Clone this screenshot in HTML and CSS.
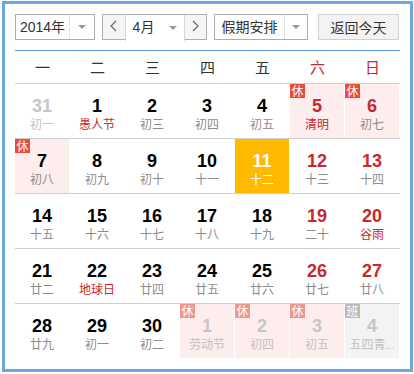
FILE: index.html
```html
<!DOCTYPE html>
<html lang="zh-CN">
<head>
    <meta charset="UTF-8">
    <meta name="viewport" content="width=device-width, initial-scale=1.0">
    <title>万年历</title>
    <link rel="stylesheet" href="styles.css">
</head>
<body>
    <div class="calendar">
        <div class="toolbar">
            <div class="select year-select">
                <span class="select-text">2014年</span>
                <span class="select-arrow"><i></i></span>
            </div>
            <div class="month-group">
                <button class="nav-btn">
                    <svg width="7" height="12" viewBox="0 0 7 12"><polyline points="6,1 1,6 6,11" fill="none" stroke="#666" stroke-width="1.2"/></svg>
                </button>
                <div class="select month-select">
                    <span class="select-text">4月</span>
                    <span class="select-arrow"><i></i></span>
                </div>
                <button class="nav-btn">
                    <svg width="7" height="12" viewBox="0 0 7 12"><polyline points="1,1 6,6 1,11" fill="none" stroke="#666" stroke-width="1.2"/></svg>
                </button>
            </div>
            <div class="select holiday-select">
                <span class="select-text">假期安排</span>
                <span class="select-arrow"><i></i></span>
            </div>
            <button class="today-btn">返回今天</button>
        </div>

        <div class="week-head">
            <span>一</span><span>二</span><span>三</span><span>四</span><span>五</span>
            <span class="weekend">六</span><span class="weekend">日</span>
        </div>

        <div class="week">
            <div class="day other"><b class="num">31</b><span class="lunar">初一</span></div>
            <div class="day"><b class="num">1</b><span class="lunar fest">愚人节</span></div>
            <div class="day"><b class="num">2</b><span class="lunar">初三</span></div>
            <div class="day"><b class="num">3</b><span class="lunar">初四</span></div>
            <div class="day"><b class="num">4</b><span class="lunar">初五</span></div>
            <div class="day rest red"><span class="tag">休</span><b class="num">5</b><span class="lunar fest">清明</span></div>
            <div class="day rest red"><span class="tag">休</span><b class="num">6</b><span class="lunar">初七</span></div>
        </div>
        <div class="week">
            <div class="day rest"><span class="tag">休</span><b class="num">7</b><span class="lunar">初八</span></div>
            <div class="day"><b class="num">8</b><span class="lunar">初九</span></div>
            <div class="day"><b class="num">9</b><span class="lunar">初十</span></div>
            <div class="day"><b class="num">10</b><span class="lunar">十一</span></div>
            <div class="day today"><b class="num">11</b><span class="lunar">十二</span></div>
            <div class="day red"><b class="num">12</b><span class="lunar">十三</span></div>
            <div class="day red"><b class="num">13</b><span class="lunar">十四</span></div>
        </div>
        <div class="week">
            <div class="day"><b class="num">14</b><span class="lunar">十五</span></div>
            <div class="day"><b class="num">15</b><span class="lunar">十六</span></div>
            <div class="day"><b class="num">16</b><span class="lunar">十七</span></div>
            <div class="day"><b class="num">17</b><span class="lunar">十八</span></div>
            <div class="day"><b class="num">18</b><span class="lunar">十九</span></div>
            <div class="day red"><b class="num">19</b><span class="lunar">二十</span></div>
            <div class="day red"><b class="num">20</b><span class="lunar fest">谷雨</span></div>
        </div>
        <div class="week">
            <div class="day"><b class="num">21</b><span class="lunar">廿二</span></div>
            <div class="day"><b class="num">22</b><span class="lunar fest">地球日</span></div>
            <div class="day"><b class="num">23</b><span class="lunar">廿四</span></div>
            <div class="day"><b class="num">24</b><span class="lunar">廿五</span></div>
            <div class="day"><b class="num">25</b><span class="lunar">廿六</span></div>
            <div class="day red"><b class="num">26</b><span class="lunar">廿七</span></div>
            <div class="day red"><b class="num">27</b><span class="lunar">廿八</span></div>
        </div>
        <div class="week last">
            <div class="day"><b class="num">28</b><span class="lunar">廿九</span></div>
            <div class="day"><b class="num">29</b><span class="lunar">初一</span></div>
            <div class="day"><b class="num">30</b><span class="lunar">初二</span></div>
            <div class="day rest other"><span class="tag">休</span><b class="num">1</b><span class="lunar">劳动节</span></div>
            <div class="day rest other"><span class="tag">休</span><b class="num">2</b><span class="lunar">初四</span></div>
            <div class="day rest other"><span class="tag">休</span><b class="num">3</b><span class="lunar">初五</span></div>
            <div class="day work other" title="五四青年节"><span class="tag">班</span><b class="num">4</b><span class="lunar">五四青<span class="dots">...</span></span></div>
        </div>
    </div>
</body>
</html>
```

FILE: styles.css
```css
body {
    margin: 0;
    background: #fff;
    font-family: "Liberation Sans", "Noto Sans CJK SC", sans-serif;
    color: #333;
}
.calendar {
    width: 385px;
    margin: 1px 0 0 2px;
    padding: 10px 10px 11px 10px;
    border: 3px solid #6ea7e0;
}
.toolbar {
    display: flex;
    height: 26px;
    padding-bottom: 10px;
    border-bottom: 1px solid #5b9bdc;
}
.select {
    display: flex;
    box-sizing: border-box;
    height: 26px;
    border: 1px solid #adadad;
    background: #fff;
    font-size: 14px;
}
.select-text {
    flex: 1;
    line-height: 24px;
    text-align: center;
}
.select-arrow {
    display: flex;
    align-items: center;
    justify-content: center;
    width: 24px;
    border-left: 1px solid #e2e2e2;
}
.select-arrow i {
    border-left: 4px solid transparent;
    border-right: 4px solid transparent;
    border-top: 4px solid #999;
}
.year-select {
    width: 80px;
}
.month-group {
    display: flex;
    box-sizing: border-box;
    width: 105px;
    height: 26px;
    margin-left: 7px;
    border: 1px solid #adadad;
}
.month-group .select {
    width: 60px;
    border: none;
    border-left: 1px solid #d6d6d6;
    border-right: 1px solid #d6d6d6;
}
.month-group .select-arrow {
    border-left: none;
    width: 22px;
}
.nav-btn {
    flex: 1;
    padding: 0;
    border: none;
    background: #f5f5f5;
    cursor: pointer;
}
.holiday-select {
    width: 94px;
    margin-left: 7px;
}
.holiday-select .select-arrow {
    width: 22px;
}
.today-btn {
    box-sizing: border-box;
    width: 81px;
    height: 26px;
    margin-left: 10px;
    padding: 0;
    border: 1px solid #d0d0d0;
    background: #f3f3f3;
    color: #333;
    font-family: inherit;
    font-size: 14px;
    cursor: pointer;
}
.week-head {
    display: grid;
    grid-template-columns: repeat(7, 55px);
    height: 32px;
    line-height: 32px;
    border-bottom: 1px solid #cfcfcf;
    text-align: center;
    font-size: 15px;
    font-family: "Noto Sans CJK SC", sans-serif;
}
.week-head .weekend {
    color: #c8282e;
}
.week {
    display: grid;
    grid-template-columns: repeat(7, 55px);
    border-bottom: 1px solid #cfcfcf;
}
.week.last {
    border-bottom: none;
}
.day {
    position: relative;
    box-sizing: border-box;
    width: 54px;
    height: 54px;
    padding-top: 12px;
    text-align: center;
}
.num {
    display: block;
    height: 20px;
    line-height: 20px;
    font-size: 18px;
    color: #000;
}
.lunar {
    display: block;
    line-height: 16px;
    font-size: 12px;
    font-family: "Noto Sans CJK SC", sans-serif;
    color: #8c8c8c;
    white-space: nowrap;
}
.lunar .dots {
    font-family: "Liberation Sans", sans-serif;
    font-size: 11px;
}
.lunar.fest {
    color: #c8282e;
}
.red .num {
    color: #c8282e;
}
.rest {
    background: #fdeded;
}
.work {
    background: #f3f3f3;
}
.tag {
    position: absolute;
    left: 0;
    top: 0;
    width: 15px;
    height: 14px;
    line-height: 14px;
    font-size: 12px;
    font-family: "Noto Sans CJK SC", sans-serif;
    color: #fff;
    background: #ea4b3c;
}
.work .tag {
    background: #bcbcbc;
}
.other .num {
    color: #c6c6c6;
}
.other .lunar {
    color: #c2c2c2;
}
.other.rest .tag {
    background: #f0968d;
}
.today {
    background: #ffba00;
}
.today .num,
.today .lunar {
    color: #fff;
}
```
